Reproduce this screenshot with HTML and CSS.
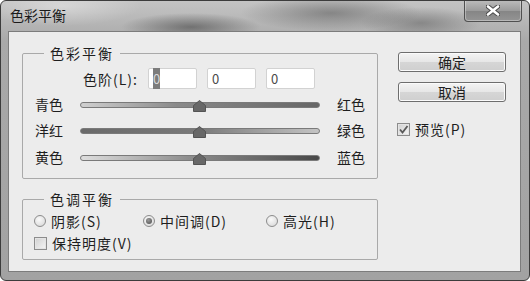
FILE: index.html
```html
<!DOCTYPE html>
<html>
<head>
    <title>色彩平衡</title>
    <link rel="stylesheet" href="styles.css">
</head>
<body>
    <div class="window">
        <div class="titlebar">
            <span class="title">色彩平衡</span>
            <div class="close-btn">
                <svg width="14" height="11" viewBox="0 0 14 11">
                    <path d="M2 1.5 L12 9.5 M12 1.5 L2 9.5" stroke="#4a4a4a" stroke-width="4.5" stroke-linecap="round"/>
                    <path d="M2 1.5 L12 9.5 M12 1.5 L2 9.5" stroke="#ffffff" stroke-width="2.6" stroke-linecap="round"/>
                </svg>
            </div>
        </div>
        <div class="client">
            <div class="main">
                <div class="group group-balance">
                    <span class="group-title">色彩平衡</span>
                    <div class="level-row">
                        <span class="level-label">色阶(L):</span>
                        <div class="num-input"><span class="selected">0</span></div>
                        <div class="num-input">0</div>
                        <div class="num-input">0</div>
                    </div>
                    <div class="slider-row">
                        <span class="slider-label">青色</span>
                        <div class="track track-cr">
                            <svg class="thumb" width="13" height="12" viewBox="0 0 13 12"><polygon points="6.5,0.5 12.5,5.5 12.5,11.5 0.5,11.5 0.5,5.5" fill="#686868" stroke="#545454"/></svg>
                        </div>
                        <span class="slider-label-right">红色</span>
                    </div>
                    <div class="slider-row">
                        <span class="slider-label">洋红</span>
                        <div class="track track-mg">
                            <svg class="thumb" width="13" height="12" viewBox="0 0 13 12"><polygon points="6.5,0.5 12.5,5.5 12.5,11.5 0.5,11.5 0.5,5.5" fill="#686868" stroke="#545454"/></svg>
                        </div>
                        <span class="slider-label-right">绿色</span>
                    </div>
                    <div class="slider-row">
                        <span class="slider-label">黄色</span>
                        <div class="track track-yb">
                            <svg class="thumb" width="13" height="12" viewBox="0 0 13 12"><polygon points="6.5,0.5 12.5,5.5 12.5,11.5 0.5,11.5 0.5,5.5" fill="#686868" stroke="#545454"/></svg>
                        </div>
                        <span class="slider-label-right">蓝色</span>
                    </div>
                </div>

                <div class="group group-tone">
                    <span class="group-title">色调平衡</span>
                    <div class="radio-row">
                        <label class="radio-item item-shadow"><span class="radio"></span>阴影(S)</label>
                        <label class="radio-item item-mid"><span class="radio checked"></span>中间调(D)</label>
                        <label class="radio-item"><span class="radio"></span>高光(H)</label>
                    </div>
                    <label class="check-item"><span class="checkbox"></span>保持明度(V)</label>
                </div>
            </div>

            <div class="side">
                <button class="btn">确定</button>
                <button class="btn">取消</button>
                <label class="check-item preview">
                    <span class="checkbox checked">
                        <svg width="11" height="11" viewBox="0 0 11 11"><path d="M2 5.5 L4.5 8.5 L9.5 2" fill="none" stroke="#5a5a5a" stroke-width="1.8"/></svg>
                    </span>预览(P)
                </label>
            </div>
        </div>
    </div>
</body>
</html>
```

FILE: styles.css
```css
body {
    margin: 0;
    padding: 0;
    font-family: "Noto Sans CJK SC", "Noto Sans", sans-serif;
    font-size: 14px;
    color: #1e1e1e;
    background-color: #ffffff;
}
.window {
    width: 530px;
    height: 281px;
    box-sizing: border-box;
    border: 1px solid #3c3c3c;
    border-radius: 6px;
    display: flex;
    flex-direction: column;
    background:
        radial-gradient(ellipse 70px 14px at 190px 26px, rgba(70, 70, 70, 0.6), transparent),
        radial-gradient(ellipse 90px 18px at 330px 12px, rgba(80, 80, 80, 0.5), transparent),
        radial-gradient(ellipse 60px 16px at 420px 22px, rgba(80, 80, 80, 0.45), transparent),
        radial-gradient(ellipse 80px 20px at 60px 5px, rgba(255, 255, 255, 0.35), transparent),
        linear-gradient(to bottom, #c4c4c4, #a9a9a9 40px, #a2a2a2);
    overflow: hidden;
}
.titlebar {
    height: 30px;
    display: flex;
    justify-content: space-between;
    align-items: flex-start;
    padding: 0 7px 0 9px;
}
.title {
    margin-top: 4px;
    line-height: 20px;
    font-size: 14px;
    color: #1a1a1a;
}
.close-btn {
    width: 56px;
    height: 21px;
    margin-top: -1px;
    border: 1px solid #505050;
    border-top: none;
    border-radius: 0 0 4px 4px;
    background: linear-gradient(to bottom, #bdbdbd, #9c9c9c 50%, #858585 51%, #949494);
    box-shadow: inset 0 0 0 1px rgba(255, 255, 255, 0.35);
    display: flex;
    justify-content: center;
    align-items: center;
}
.client {
    flex: 1;
    margin: 0 8px 8px 7px;
    border: 1px solid #7c7c7c;
    background-color: #ececec;
    display: flex;
    gap: 20px;
    padding: 20px 0 0 13px;
}
.main {
    width: 356px;
    margin-top: 1px;
    display: flex;
    flex-direction: column;
    gap: 20px;
}
.group {
    position: relative;
    box-sizing: border-box;
    border: 1px solid #a9a9a9;
    border-radius: 2px;
}
.group-balance {
    height: 126px;
    padding-top: 14px;
}
.group-tone {
    height: 61px;
    padding: 11px 0 0 11px;
}
.group-title {
    position: absolute;
    top: -11px;
    left: 21px;
    padding: 0 6px;
    line-height: 20px;
    letter-spacing: 2px;
    background-color: #ececec;
}
.level-row {
    display: flex;
    align-items: center;
    gap: 10px;
    height: 21px;
}
.level-label {
    width: 115px;
    text-align: right;
    line-height: 20px;
    letter-spacing: 1px;
}
.num-input {
    box-sizing: border-box;
    width: 49px;
    height: 21px;
    border: 1px solid #d2d2d2;
    border-radius: 2px;
    background-color: #ffffff;
    font-size: 13px;
    line-height: 19px;
    padding-left: 4px;
    color: #4a4a4a;
}
.selected {
    background-color: #7c7c7c;
    color: #d8d8d8;
    padding: 1px 0;
}
.slider-row {
    display: flex;
    align-items: center;
    height: 26px;
    padding-left: 12px;
}
.level-row + .slider-row {
    margin-top: 2px;
}
.slider-row:last-child {
    height: 27px;
}
.slider-label {
    width: 45px;
    line-height: 20px;
}
.slider-label-right {
    margin-left: 17px;
    line-height: 20px;
}
.track {
    position: relative;
    box-sizing: border-box;
    width: 240px;
    height: 6px;
    margin-top: 2px;
    border: 1px solid #7a7a7a;
    border-radius: 3px;
}
.track-cr {
    background: linear-gradient(to right, #d0d0d0, #8a8a8a 40%, #666666);
}
.track-mg {
    background: linear-gradient(to right, #6a6a6a, #7a7a7a 50%, #c4c4c4);
}
.track-yb {
    background: linear-gradient(to right, #dedede, #8e8e8e 45%, #484848);
}
.thumb {
    position: absolute;
    left: 112px;
    top: -3px;
}
.radio-row {
    display: flex;
    align-items: center;
    height: 20px;
}
.radio-item, .check-item {
    display: flex;
    align-items: center;
    line-height: 20px;
    letter-spacing: 1px;
}
.item-shadow {
    width: 109px;
}
.item-mid {
    width: 123px;
}
.radio {
    box-sizing: border-box;
    width: 12px;
    height: 12px;
    margin-right: 5px;
    border: 1px solid #8c8c8c;
    border-radius: 50%;
    background: radial-gradient(circle at 40% 35%, #fafafa, #d4d4d4);
    display: flex;
    justify-content: center;
    align-items: center;
}
.radio.checked::after {
    content: "";
    width: 6px;
    height: 6px;
    border-radius: 50%;
    background: radial-gradient(circle at 40% 35%, #9a9a9a, #4a4a4a);
}
.check-item {
    margin-top: 2px;
}
.checkbox {
    box-sizing: border-box;
    width: 13px;
    height: 13px;
    margin-right: 5px;
    border: 1px solid #8c8c8c;
    background: linear-gradient(135deg, #d0d0d0, #f6f6f6);
    box-shadow: inset 0 0 0 1px #e4e4e4;
    display: flex;
    justify-content: center;
    align-items: center;
}
.side {
    width: 108px;
    display: flex;
    flex-direction: column;
    gap: 10px;
}
.btn {
    box-sizing: border-box;
    width: 108px;
    height: 20px;
    padding: 0;
    border: 1px solid #6e6e6e;
    border-radius: 3px;
    background: linear-gradient(to bottom, #f4f4f4, #e6e6e6 50%, #d6d6d6 51%, #cfcfcf);
    box-shadow: inset 0 0 0 1px #fbfbfb;
    font-family: "Noto Sans CJK SC", sans-serif;
    font-size: 14px;
    line-height: 18px;
    color: #1e1e1e;
}
.preview {
    margin-top: 7px;
    margin-left: -1px;
}
```
